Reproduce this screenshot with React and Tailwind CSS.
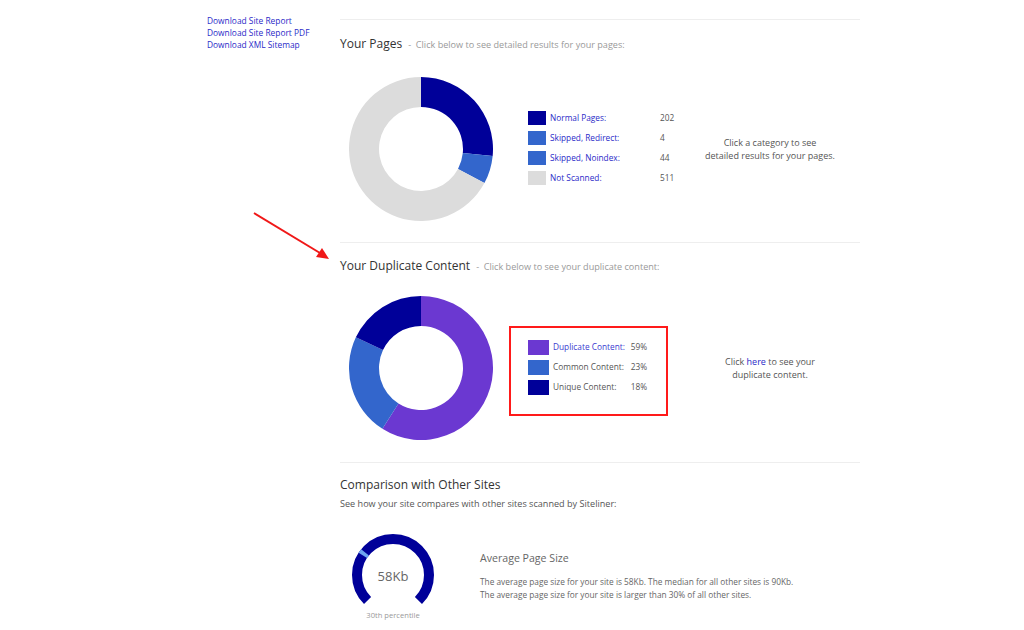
import React from "react";

const F = { fontFamily: '"Open Sans", "Noto Sans", Arial, sans-serif' };

function polar(cx, cy, r, deg) {
  const a = ((deg - 90) * Math.PI) / 180;
  return [cx + r * Math.cos(a), cy + r * Math.sin(a)];
}

function ringPath(cx, cy, ro, ri, a0, a1) {
  const large = a1 - a0 > 180 ? 1 : 0;
  const [x0, y0] = polar(cx, cy, ro, a0);
  const [x1, y1] = polar(cx, cy, ro, a1);
  const [x2, y2] = polar(cx, cy, ri, a1);
  const [x3, y3] = polar(cx, cy, ri, a0);
  return `M${x0} ${y0} A${ro} ${ro} 0 ${large} 1 ${x1} ${y1} L${x2} ${y2} A${ri} ${ri} 0 ${large} 0 ${x3} ${y3} Z`;
}

function Donut({ segments }) {
  const total = segments.reduce((s, x) => s + x.v, 0);
  let a = 0;
  return (
    <svg width="144" height="144" viewBox="0 0 144 144">
      {segments.map((s, i) => {
        const a0 = a;
        const a1 = a + (s.v / total) * 360;
        a = a1;
        return <path key={i} d={ringPath(72, 72, 72, 42, a0, a1)} fill={s.c} />;
      })}
    </svg>
  );
}

function Gauge() {
  const cx = 45, cy = 45, r = 36;
  const arc = (a0, a1) => {
    const [x0, y0] = polar(cx, cy, r, a0);
    const [x1, y1] = polar(cx, cy, r, a1);
    const large = a1 - a0 > 180 ? 1 : 0;
    return `M${x0} ${y0} A${r} ${r} 0 ${large} 1 ${x1} ${y1}`;
  };
  return (
    <svg width="90" height="80" viewBox="0 0 90 80">
      <path d={arc(-135, 135)} fill="none" stroke="#000099" strokeWidth="10" />
      <path d={arc(-57, -51)} fill="none" stroke="#6fa6f0" strokeWidth="10" />
    </svg>
  );
}

const DARK = "#000099";
const MID = "#3366cc";
const GREY = "#dcdcdc";
const PURPLE = "#6b38d1";

export default function App() {
  return (
    <div className="relative w-[1024px] h-[630px] overflow-hidden bg-white text-[#555]" style={F}>
      <div className="flex">
        {/* left links */}
        <div className="w-[133px] ml-[207px] pt-[15px] flex flex-col text-[8.4px] leading-[12px] text-[#2a2ac8] whitespace-nowrap">
          <a>Download Site Report</a>
          <a>Download Site Report PDF</a>
          <a>Download XML Sitemap</a>
        </div>

        {/* main column */}
        <div className="w-[520px] mt-[19px]">
          {/* Your Pages */}
          <section className="border-t border-[#eeeeee] h-[223px] pt-[16px]">
            <div className="flex items-baseline leading-[16px] whitespace-nowrap">
              <span className="text-[12px] text-[#333]">Your Pages</span>
              <span className="text-[9.1px] text-[#999] ml-[6px]">-&nbsp;&nbsp;Click below to see detailed results for your pages:</span>
            </div>
            <div className="flex items-center mt-[24px]">
              <div className="ml-[9px]">
                <Donut segments={[{ v: 202, c: DARK }, { v: 48, c: MID }, { v: 511, c: GREY }]} />
              </div>
              <div className="ml-[35px] -mt-[2px] flex flex-col gap-[6px] text-[8.3px] whitespace-nowrap">
                {[
                  ["Normal Pages:", "202", DARK],
                  ["Skipped, Redirect:", "4", MID],
                  ["Skipped, Noindex:", "44", MID],
                  ["Not Scanned:", "511", GREY],
                ].map(([l, n, c]) => (
                  <div key={l} className="flex items-center h-[14px]">
                    <div className="w-[18px] h-[14px]" style={{ background: c }} />
                    <span className="w-[114px] pl-[4px] text-[#2a2ac8]">{l}</span>
                    <span className="text-[#555]">{n}</span>
                  </div>
                ))}
              </div>
              <div className="ml-auto mr-[10px] w-[160px] text-center text-[9px] leading-[13px] text-[#555] whitespace-nowrap">
                Click a category to see<br />detailed results for your pages.
              </div>
            </div>
          </section>

          {/* Duplicate Content */}
          <section className="border-t border-[#eeeeee] h-[220px] pt-[15px]">
            <div className="flex items-baseline leading-[16px] whitespace-nowrap">
              <span className="text-[12px] text-[#333]">Your Duplicate Content</span>
              <span className="text-[9.1px] text-[#999] ml-[6px]">-&nbsp;&nbsp;Click below to see your duplicate content:</span>
            </div>
            <div className="flex items-center mt-[21px]">
              <div className="ml-[9px]">
                <Donut segments={[{ v: 59, c: PURPLE }, { v: 23, c: MID }, { v: 18, c: DARK }]} />
              </div>
              <div className="ml-[16px] mt-[6px] w-[159px] h-[90px] border-2 border-[#ff1a1a] pl-[17px] pt-[12px] flex flex-col gap-[5px] text-[8.3px] whitespace-nowrap">
                {[
                  ["Duplicate Content:", "59%", PURPLE, "text-[#3a3ad0]"],
                  ["Common Content:", "23%", MID, "text-[#555]"],
                  ["Unique Content:", "18%", DARK, "text-[#555]"],
                ].map(([l, n, c, tc]) => (
                  <div key={l} className="flex items-center h-[15px]">
                    <div className="w-[21px] h-[15px]" style={{ background: c }} />
                    <span className={`w-[73px] pl-[4px] ${tc}`}>{l}</span>
                    <span className="w-[25px] text-right text-[#555]">{n}</span>
                  </div>
                ))}
              </div>
              <div className="ml-auto mr-[10px] w-[160px] text-center text-[9px] leading-[13px] text-[#555] whitespace-nowrap">
                Click <a className="text-[#2a2ac8]">here</a> to see your<br />duplicate content.
              </div>
            </div>
          </section>

          {/* Comparison */}
          <section className="border-t border-[#eeeeee] pt-[14px]">
            <div className="text-[12px] leading-[16px] text-[#333]">Comparison with Other Sites</div>
            <div className="text-[9.1px] leading-[12px] text-[#555] mt-[5px] whitespace-nowrap">
              See how your site compares with other sites scanned by Siteliner:
            </div>
            <div className="flex mt-[20px]">
              <div className="relative w-[90px] ml-[8px]">
                <Gauge />
                <div className="absolute left-0 right-0 top-[36px] text-center text-[13px] leading-[20px] text-[#666]">58Kb</div>
                <div className="absolute left-0 right-0 top-[80px] text-center text-[7.6px] leading-[10px] text-[#999] whitespace-nowrap">30th percentile</div>
              </div>
              <div className="ml-[42px] pt-[21px]">
                <div className="text-[10.6px] leading-[14px] text-[#666]">Average Page Size</div>
                <div className="mt-[10px] text-[8.3px] leading-[13px] text-[#666] whitespace-nowrap">
                  The average page size for your site is 58Kb. The median for all other sites is 90Kb.<br />
                  The average page size for your site is larger than 30% of all other sites.
                </div>
              </div>
            </div>
          </section>
        </div>
      </div>

      {/* annotation arrow */}
      <svg className="absolute left-0 top-0 pointer-events-none" width="1024" height="630">
        <line x1="254" y1="213" x2="320" y2="253" stroke="#f01818" strokeWidth="2" />
        <polygon points="329,259 316,257 322,248" fill="#f01818" />
      </svg>
    </div>
  );
}
